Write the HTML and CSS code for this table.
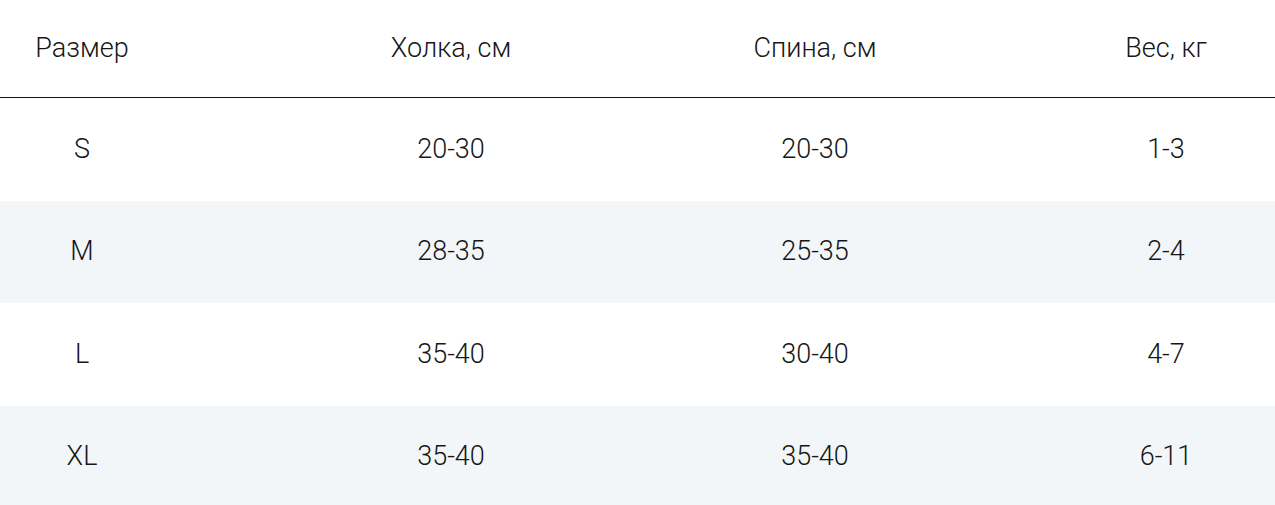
FILE: index.html
```html
<!DOCTYPE html>
<html lang="ru">
<head>
<meta charset="utf-8">
<link rel="stylesheet" href="styles.css">
</head>
<body>
<div class="table">
  <div class="row head">
    <div class="cell">Размер</div>
    <div class="cell">Холка, см</div>
    <div class="cell">Спина, см</div>
    <div class="cell last">Вес, кг</div>
  </div>
  <div class="row">
    <div class="cell">S</div>
    <div class="cell">20-30</div>
    <div class="cell">20-30</div>
    <div class="cell last">1-3</div>
  </div>
  <div class="row alt">
    <div class="cell">M</div>
    <div class="cell">28-35</div>
    <div class="cell">25-35</div>
    <div class="cell last">2-4</div>
  </div>
  <div class="row">
    <div class="cell">L</div>
    <div class="cell">35-40</div>
    <div class="cell">30-40</div>
    <div class="cell last">4-7</div>
  </div>
  <div class="row alt">
    <div class="cell">XL</div>
    <div class="cell">35-40</div>
    <div class="cell">35-40</div>
    <div class="cell last">6-11</div>
  </div>
</div>
</body>
</html>
```
FILE: styles.css
```css
html, body {
  margin: 0;
  padding: 0;
  background: #ffffff;
}
body {
  font-family: Roboto, "Liberation Sans", sans-serif;
  font-weight: 300;
  font-size: 27px;
  color: #161616;
  overflow: hidden;
}
.table {
  width: 1275px;
}
.row {
  display: grid;
  grid-template-columns: 164px 574px 154px 383px;
  height: 102.5px;
  align-items: center;
}
.row.head {
  height: 96px;
  border-bottom: 1px solid #111111;
  padding-bottom: 1px;
}
.row.alt {
  background: #f3f6f9;
}
.cell {
  text-align: center;
  white-space: nowrap;
  line-height: 1;
}
.cell.last {
  padding-left: 165px;
}
```
